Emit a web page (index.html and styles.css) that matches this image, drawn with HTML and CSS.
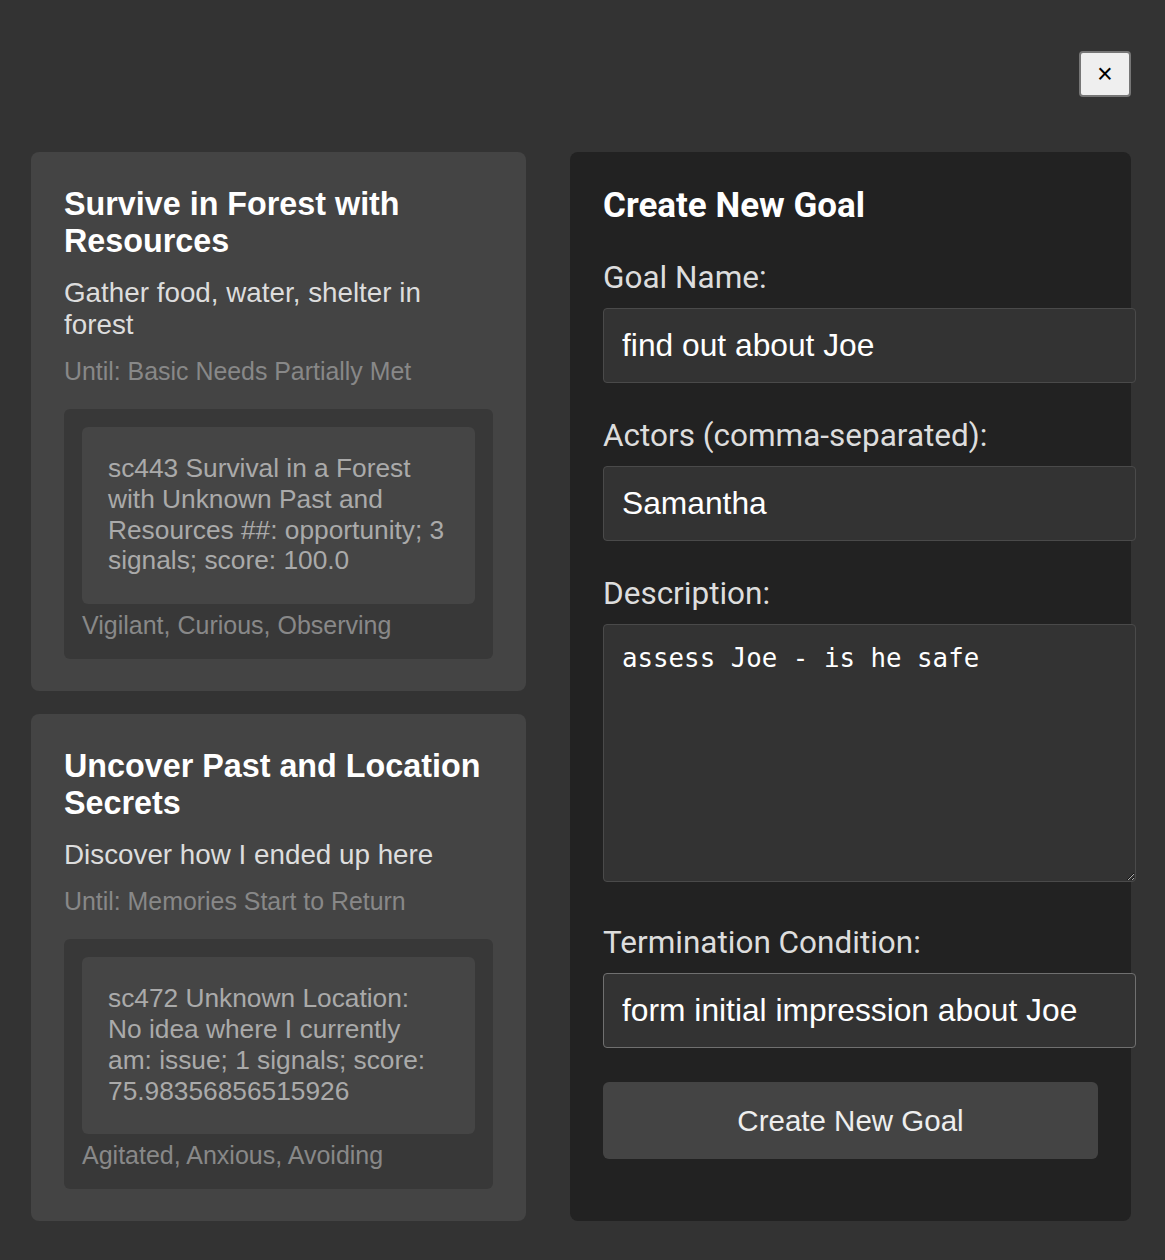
FILE: index.html
```html
<!DOCTYPE html>
<html lang="en">
<head>
<meta charset="utf-8">
<title>Goals</title>
<link rel="stylesheet" href="styles.css">
</head>
<body>
<div class="modal">
  <div class="modal-header">
    <button class="close-btn" type="button" aria-label="Close">×</button>
  </div>
  <div class="modal-body">
    <div class="goal-list">
      <section class="goal-card">
        <h3 class="goal-title">Survive in Forest with Resources</h3>
        <p class="goal-desc">Gather food, water, shelter in forest</p>
        <p class="goal-until">Until: Basic Needs Partially Met</p>
        <div class="signal-box">
          <div class="signal-item">sc443 Survival in a Forest with Unknown Past and Resources ##: opportunity; 3 signals; score: 100.0</div>
          <div class="signal-tags">Vigilant, Curious, Observing</div>
        </div>
      </section>
      <section class="goal-card">
        <h3 class="goal-title">Uncover Past and Location Secrets</h3>
        <p class="goal-desc">Discover how I ended up here</p>
        <p class="goal-until">Until: Memories Start to Return</p>
        <div class="signal-box">
          <div class="signal-item">sc472 Unknown Location: No idea where I currently am: issue; 1 signals; score: 75.98356856515926</div>
          <div class="signal-tags">Agitated, Anxious, Avoiding</div>
        </div>
      </section>
    </div>
    <form class="goal-form">
      <h2 class="form-title">Create New Goal</h2>
      <label class="field-label" for="goal-name">Goal Name:</label>
      <input class="field-input" id="goal-name" type="text" value="find out about Joe">
      <label class="field-label" for="goal-actors">Actors (comma-separated):</label>
      <input class="field-input" id="goal-actors" type="text" value="Samantha">
      <label class="field-label" for="goal-desc">Description:</label>
      <textarea class="field-textarea" id="goal-desc">assess Joe - is he safe</textarea>
      <label class="field-label" for="goal-term">Termination Condition:</label>
      <input class="field-input field-input--hover" id="goal-term" type="text" value="form initial impression about Joe">
      <button class="submit-btn" type="button">Create New Goal</button>
    </form>
  </div>
</div>
</body>
</html>
```

FILE: styles.css
```css
html, body {
  margin: 0;
  padding: 0;
  background: #333333;
}

body {
  font-family: "Liberation Sans", Arial, sans-serif;
  color: #dddddd;
}

.modal {
  padding: 51px 34px 39px 31px;
}

.modal-header {
  display: flex;
  justify-content: flex-end;
  height: 46px;
  margin-bottom: 55px;
}

.close-btn {
  width: 52px;
  height: 46px;
  padding: 0;
  background: #efefef;
  border: 2px solid #767676;
  border-radius: 4px;
  color: #000000;
  font-family: "Liberation Sans", Arial, sans-serif;
  font-size: 27px;
  line-height: 1;
  cursor: pointer;
}

.modal-body {
  display: grid;
  grid-template-columns: 495px 561px;
  column-gap: 44px;
  align-items: stretch;
}

.goal-list {
  display: flex;
  flex-direction: column;
  gap: 23px;
}

.goal-card {
  background: #444444;
  border-radius: 8px;
  padding: 34px 33px 32px 33px;
}

.goal-title {
  margin: 0 0 17px 0;
  font-size: 32.3px;
  font-weight: bold;
  color: #ffffff;
  line-height: 37px;
}

.goal-desc {
  margin: 0 0 16px 0;
  font-size: 27.8px;
  line-height: 32px;
  color: #dddddd;
}

.goal-until {
  margin: 0 0 23px 0;
  font-size: 24.9px;
  line-height: 29px;
  color: #888888;
}

.signal-box {
  background: #383838;
  border-radius: 6px;
  padding: 18px 18px 19px 18px;
}

.signal-item {
  background: #454545;
  border-radius: 6px;
  padding: 26px 26px 28px 26px;
  font-size: 26.3px;
  line-height: 30.8px;
  color: #aaaaaa;
}

.signal-tags {
  margin-top: 7px;
  font-size: 25px;
  line-height: 29px;
  color: #888888;
}

.goal-form {
  background: #222222;
  border-radius: 8px;
  padding: 33px;
  font-family: Roboto, "Liberation Sans", sans-serif;
}

.form-title {
  margin: 0 0 33px 0;
  font-size: 35px;
  font-weight: bold;
  color: #ffffff;
  line-height: 41px;
}

.field-label {
  display: block;
  margin-bottom: 12px;
  font-size: 31.5px;
  line-height: 37px;
  color: #dddddd;
}

.field-input,
.field-textarea {
  display: block;
  width: 100%;
  padding: 18px;
  margin: 0 0 34px 0;
  background: #333333;
  border: 1px solid #4a4a4a;
  border-radius: 4px;
  color: #ffffff;
  outline: none;
}

.field-input {
  height: 37px;
  font-family: "Liberation Sans", Arial, sans-serif;
  font-size: 31.75px;
}

.field-input--hover {
  border-color: #707070;
}

.field-textarea {
  height: 220px;
  margin-bottom: 42px;
  font-family: "DejaVu Sans Mono", monospace;
  font-size: 25.8px;
  color-scheme: dark;
}

.submit-btn {
  display: block;
  width: 100%;
  height: 77px;
  padding: 0 22px;
  background: #444444;
  border: none;
  border-radius: 6px;
  color: #eeeeee;
  font-family: "Liberation Sans", Arial, sans-serif;
  font-size: 29.5px;
  cursor: pointer;
}
```
